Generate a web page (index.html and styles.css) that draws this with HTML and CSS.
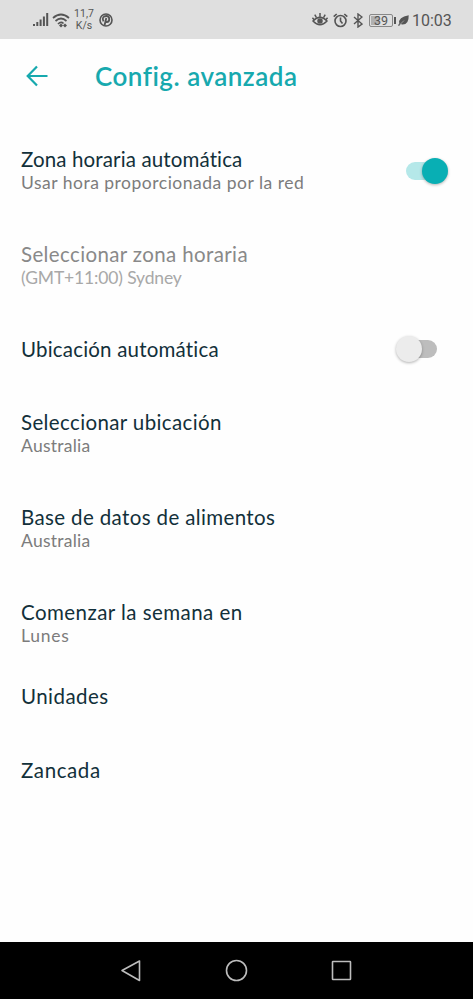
FILE: index.html
```html
<!DOCTYPE html>
<html lang="es">
<head>
<meta charset="utf-8">
<meta name="viewport" content="width=device-width">
<title>Config. avanzada</title>
<link rel="stylesheet" href="styles.css">
</head>
<body>
<div class="status">
  <svg class="signal" width="16" height="14" viewBox="0 0 16 14" fill="#555"><path d="M0 11h2v2H0zM3.3 9h2v4h-2zM6.6 6.5h2V13h-2zM9.9 3.5h2V13h-2zM13.2 0h2v13h-2z"/></svg>
  <svg class="wifi" width="18" height="15" viewBox="0 0 18 15" fill="none" stroke="#555" stroke-width="1.7"><path d="M1 5Q9-2 17 5M3.5 8Q9 3 14.5 8M6 11Q9 8 11.5 10.5"/><path d="M7 12.500l2-2 2 2-2 2zM13 10.500l2 2-2 2-2-2z" fill="#555" stroke="none"/></svg>
  <div class="speed"><span>11,7</span><span>K/s</span></div>
  <svg class="pin" width="14" height="14" viewBox="0 0 14 14" fill="none" stroke="#555"><circle cx="7" cy="7" r="6" stroke-width="1.600"/><path d="M4.500 8.300C2.500 4.500 5 3 7.200 3c4.300 0 3.600 6 .7 6-1 0-1.300-.7-1.300-.7M7.300 5L5.500 12.500" stroke-width="1.800"/></svg>
  <div class="right">
    <svg width="16" height="15" viewBox="0 0 16 15" fill="none" stroke="#555" stroke-width="1.500"><path d="M1 9Q8 1.500 15 9Q8 16.500 1 9zM8 4.500V1M4.300 5.300L2.800 2.700M11.700 5.300l1.500-2.600M1.800 7.300L.4 5.800M14.200 7.300l1.400-1.500"/><circle cx="8" cy="9" r="2" fill="#555"/></svg>
    <svg class="alarm" width="15" height="15" viewBox="0 0 15 15" fill="none" stroke="#555" stroke-width="1.600"><circle cx="7.500" cy="8" r="5.500"/><path d="M7.500 4.500V8l2 2.500M.7 3.700L3.700 1M14.300 3.700L11.300 1"/></svg>
    <svg class="bt" width="10" height="15" viewBox="0 0 10 15" fill="none" stroke="#555" stroke-width="1.400"><path d="M1 4l8 7-4 3V1l4 3-8 7"/></svg>
    <div class="battery">39</div><i class="cap"></i>
    <svg class="leaf" width="11" height="11" viewBox="0 0 11 11"><path d="M10.700.3Q11 10 4 9.500L2.800 9 1 11 0 10.300 1.300 8.500Q0 2 10.700.3z" fill="#555"/><path d="M2 9.500L6 5.500" stroke="#dedede" stroke-width=".5"/></svg>
    <span class="clock">10:03</span>
  </div>
</div>
<header class="bar">
  <svg width="22" height="22" viewBox="0 0 22 22" fill="none" stroke="#17a9ae" stroke-width="2.200"><path d="M21.500 11H2M11 1.500L1.700 11l9.300 9.500"/></svg>
  <h1>Config. avanzada</h1>
</header>
<main>
  <section class="row"><div><h2 class="t1">Zona horaria automática</h2><p class="s1">Usar hora proporcionada por la red</p></div><div class="switch on"></div></section>
  <section class="row disabled"><div><h2 class="t2">Seleccionar zona horaria</h2><p class="s2">(GMT+11:00) Sydney</p></div></section>
  <section class="row"><h2 class="t3">Ubicación automática</h2><div class="switch off"></div></section>
  <section class="row near"><div><h2 class="t4">Seleccionar ubicación</h2><p>Australia</p></div></section>
  <section class="row"><div><h2 class="t5">Base de datos de alimentos</h2><p>Australia</p></div></section>
  <section class="row"><div><h2 class="t6">Comenzar la semana en</h2><p class="s6">Lunes</p></div></section>
  <section class="row units"><h2 class="t7">Unidades</h2></section>
  <section class="row last"><h2 class="t8">Zancada</h2></section>
</main>
<nav class="nav">
  <svg width="22" height="24" viewBox="0 0 22 24"><path d="M19.500 2v19.500L2 11.500z"/></svg>
  <svg width="24" height="24" viewBox="0 0 24 24"><circle cx="11.500" cy="11.500" r="10"/></svg>
  <svg width="22" height="22" viewBox="0 0 22 22"><rect x="1.500" y="1.500" width="18" height="18" rx=".5"/></svg>
</nav>
</body>
</html>
```
FILE: styles.css
```css
* { box-sizing: border-box; margin: 0; padding: 0; }
body { width: 473px; height: 999px; background: #fefefe; font-family: Lato, sans-serif; display: flex; flex-direction: column; overflow: hidden; }
svg { display: block; flex: none; }
.status { height: 39px; flex: none; background: #dfdfdf; display: flex; align-items: center; padding: 1px 22px 0 33px; color: #555; font-family: Roboto, sans-serif; }
.wifi { margin-left: 3px; }
.speed { width: 20px; margin-left: 4px; display: flex; flex-direction: column; align-items: center; font-size: 10.5px; line-height: 12px; }
.pin { margin-left: 5px; }
.right { margin-left: auto; display: flex; align-items: center; }
.right > :first-child { margin-top: -1px; }
.alarm { margin-left: 5px; }
.bt { margin-left: 5px; }
.battery { margin-left: 6px; width: 24px; height: 13px; border: 1px solid #888; border-radius: 2px; background: linear-gradient(90deg, #b0b0b0 39%, #dfdfdf 39%); box-shadow: inset 0 0 0 1px #dfdfdf; font-size: 12.5px; line-height: 11.5px; text-align: center; }
.cap { width: 2px; height: 7px; margin-left: 1px; background: #555; }
.leaf { margin-left: 2px; }
.clock { margin: 1px 0 0 3px; width: 39px; font-size: 16px; line-height: 20px; white-space: nowrap; }
.bar { height: 74px; flex: none; display: flex; align-items: center; padding: 0 26px; color: #17a9ae; }
.bar h1 { margin: 0 0 0 47px; font-size: 26px; line-height: 30px; font-weight: 600; letter-spacing: .5px; white-space: nowrap; }
main { flex: 1; padding: 34px 26px 0 21px; }
.row { display: flex; justify-content: space-between; align-items: center; margin-bottom: 47px; }
.row.near { margin-top: 49px; }
.row h2 { font-size: 20.5px; line-height: 24px; font-weight: 400; color: #12303a; letter-spacing: .37px; white-space: nowrap; }
.row p { font-size: 17.5px; line-height: 24px; color: #7c7c7c; letter-spacing: .25px; white-space: nowrap; }
.row .t1 { letter-spacing: .13px; }
.row .t3 { letter-spacing: .19px; }
.row .t6, .row .t7 { letter-spacing: .45px; }
.row .t8 { letter-spacing: .6px; }
.row .s1 { letter-spacing: .5px; }
.row .s2 { letter-spacing: -.15px; }
.row .s6 { letter-spacing: .75px; }
.disabled h2 { color: #898989; }
.disabled p { color: #a8a8a8; }
.row:has(.off) { margin-bottom: 0; }
.row.units { margin-top: -11px; margin-bottom: 50px; }
.switch { position: relative; width: 41px; height: 24px; flex: none; }
.switch::before { content: ""; position: absolute; top: 3px; width: 34px; height: 18px; border-radius: 9px; }
.switch::after { content: ""; position: absolute; top: -1px; width: 26px; height: 26px; border-radius: 50%; box-shadow: 0 1px 3px rgba(0,0,0,.3); }
.on::before { left: 0; background: #b5e8e9; }
.on::after { right: -1px; background: #08afb4; }
.off { margin-right: 10px; }
.off::before { right: 0; background: #bdbdbd; }
.off::after { left: 0; background: #ececec; }
.nav { height: 57px; flex: none; background: #000; display: flex; justify-content: space-between; align-items: center; padding: 0 120px; }
.nav svg { fill: none; stroke: #bdbdbd; stroke-width: 1.600px; stroke-linejoin: round; }
```
